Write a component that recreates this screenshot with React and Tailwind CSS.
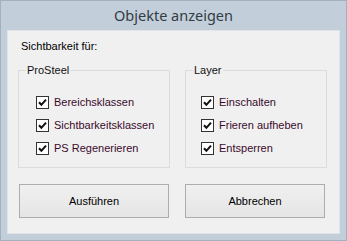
import { useState } from "react";

function Check({ label, checked, onChange }) {
  return (
    <label className="flex items-center h-[13px] gap-[5px] cursor-default">
      <span
        onClick={onChange}
        className="w-[13px] h-[13px] border border-[#333333] bg-white flex items-center justify-center"
      >
        {checked && (
          <svg width="9" height="9" viewBox="0 0 9 9">
            <path d="M1 4.2 L3.4 6.8 L8 1.6" stroke="#111" strokeWidth="2" fill="none" />
          </svg>
        )}
      </span>
      <span className="text-[11px] leading-[13px] text-[#3a0a2c]">{label}</span>
    </label>
  );
}

function GroupBox({ title, width, inset, items, state, toggle }) {
  return (
    <div className={`relative border border-[#dcdcdc] h-[98px] ${width}`}>
      <span className="absolute -top-[7px] left-[7px] px-[1px] bg-[#f0f0f0] text-[11px] leading-[13px] text-[#111]">
        {title}
      </span>
      <div className={`flex flex-col gap-[10px] pt-[25px] ${inset}`}>
        {items.map((it) => (
          <Check key={it} label={it} checked={state[it]} onChange={() => toggle(it)} />
        ))}
      </div>
    </div>
  );
}

export default function App() {
  const all = [
    "Bereichsklassen",
    "Sichtbarkeitsklassen",
    "PS Regenerieren",
    "Einschalten",
    "Frieren aufheben",
    "Entsperren",
  ];
  const [state, setState] = useState(Object.fromEntries(all.map((k) => [k, true])));
  const toggle = (k) => setState((s) => ({ ...s, [k]: !s[k] }));

  return (
    <div
      className="w-[347px] h-[241px] bg-[#c2cfda] border border-[#a3b1bd] flex flex-col"
      style={{ fontFamily: '"Liberation Sans", Arial, sans-serif' }}
    >
      <div
        className="h-[29px] flex items-center justify-center text-[14.5px] text-[#333b44]"
        style={{ fontFamily: '"Noto Sans", "Open Sans", sans-serif' }}
      >
        Objekte anzeigen
      </div>
      <div className="mx-[6px] h-[204px] bg-[#f0f0f0] border border-[#dfe5ea] flex flex-col">
        <div className="pt-[9px] pl-[13px] text-[11px] leading-[13px] text-black">Sichtbarkeit für:</div>
        <div className="flex gap-[15px] pl-[10px] mt-[17px]">
          <GroupBox
            title="ProSteel"
            width="w-[152px]"
            inset="pl-[17px]"
            items={all.slice(0, 3)}
            state={state}
            toggle={toggle}
          />
          <GroupBox
            title="Layer"
            width="w-[142px]"
            inset="pl-[15px]"
            items={all.slice(3)}
            state={state}
            toggle={toggle}
          />
        </div>
        <div className="flex gap-[16px] pl-[11px] mt-[16px]">
          <button className="w-[150px] h-[34px] border border-[#adadad] bg-gradient-to-b from-[#f0f0f0] to-[#e5e5e5] text-[11px] text-black">
            Ausführen
          </button>
          <button className="w-[140px] h-[34px] border border-[#adadad] bg-gradient-to-b from-[#f0f0f0] to-[#e5e5e5] text-[11px] text-black">
            Abbrechen
          </button>
        </div>
      </div>
    </div>
  );
}
